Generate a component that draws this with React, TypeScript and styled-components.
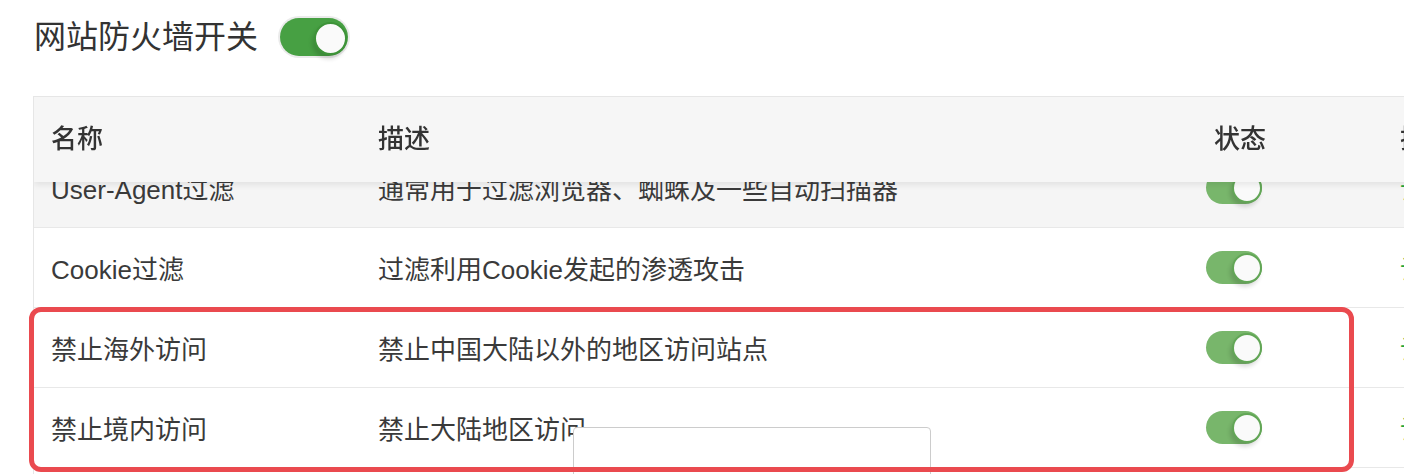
import React, { useLayoutEffect, useRef } from "react";
import styled, { createGlobalStyle } from "styled-components";

const GlobalStyle = createGlobalStyle`
  html, body {
    margin: 0;
    padding: 0;
    background: #ffffff;
    overflow: hidden;
  }
  body {
    font-family: "Liberation Sans", "Noto Sans CJK SC", sans-serif;
    color: #333333;
  }
  * { box-sizing: border-box; }
`;

const Page = styled.div`
  position: relative;
  width: 1404px;
  height: 474px;
  overflow: hidden;
  padding: 17px 0 0 33px;
`;

const TitleRow = styled.div`
  display: flex;
  align-items: center;
  gap: 22px;
  height: 40px;
`;

const Title = styled.h1`
  margin: 0;
  font-size: 32px;
  font-weight: 400;
  line-height: 40px;
  color: #333333;
  padding-left: 1px;
`;

const Track = styled.div<{ $size: "lg" | "sm" }>`
  display: flex;
  align-items: center;
  justify-content: flex-end;
  flex: none;
  width: ${(p) => (p.$size === "lg" ? "68px" : "56px")};
  height: ${(p) => (p.$size === "lg" ? "38px" : "33px")};
  border-radius: 20px;
  padding: ${(p) => (p.$size === "lg" ? "0 1px 0 0" : "0")};
  background: ${(p) => (p.$size === "lg" ? "#47a043" : "#78b66b")};
  box-shadow: ${(p) => (p.$size === "lg" ? "0 0 0 2px #ebebeb" : "none")};
`;

const Knob = styled.div<{ $size: "lg" | "sm" }>`
  width: ${(p) => (p.$size === "lg" ? "33px" : "30px")};
  height: ${(p) => (p.$size === "lg" ? "33px" : "30px")};
  margin-top: ${(p) => (p.$size === "lg" ? "2px" : "1px")};
  border-radius: 50%;
  background: #fafafa;
  border: 2px solid ${(p) => (p.$size === "lg" ? "#3e9339" : "#62a656")};
  box-shadow: -2px 4px 4px rgba(0, 0, 0, 0.14);
`;

const Switch: React.FC<{ size: "lg" | "sm" }> = ({ size }) => (
  <Track $size={size}>
    <Knob $size={size} />
  </Track>
);

const TableScroll = styled.div`
  margin-top: 39px;
  width: 1560px;
  height: 378px;
  overflow: hidden;
  border-top: 1px solid #e6e6e6;
  border-left: 1px solid #e6e6e6;
`;

const columns = "326px 828px 194px 212px";

const HeadRow = styled.div`
  position: sticky;
  top: 0;
  z-index: 2;
  display: grid;
  grid-template-columns: ${columns};
  height: 85px;
  padding-bottom: 6px;
  align-items: center;
  background: #f6f6f6;
  box-shadow: 0 3px 6px rgba(0, 0, 0, 0.08);
`;

const HeadCell = styled.div<{ $pad?: number }>`
  padding-left: ${(p) => p.$pad ?? 17}px;
  font-size: 26px;
  font-weight: 500;
  color: #333333;
  white-space: nowrap;
`;

const Row = styled.div<{ $hover?: boolean }>`
  display: grid;
  grid-template-columns: ${columns};
  height: 80px;
  align-items: center;
  border-bottom: 1px solid #e8e8e8;
  background: ${(p) => (p.$hover ? "#f5f5f5" : "#ffffff")};
`;

const Cell = styled.div<{ $pad?: number }>`
  padding-left: ${(p) => p.$pad ?? 17}px;
  font-size: 26px;
  color: #3a3a3a;
  white-space: nowrap;
  display: flex;
  align-items: center;
`;

const OpLink = styled.span`
  color: #20a53a;
  font-size: 26px;
`;

const Popup = styled.div`
  position: absolute;
  left: 573px;
  top: 427px;
  width: 358px;
  height: 80px;
  background: #ffffff;
  border: 1px solid #cccccc;
  border-radius: 4px;
  z-index: 5;
`;

const Highlight = styled.div`
  position: absolute;
  left: 29px;
  top: 307px;
  width: 1325px;
  height: 165px;
  border: 5px solid #ea4a4f;
  border-radius: 12px;
  z-index: 6;
  pointer-events: none;
`;

type Rule = { name: string; desc: string; hover?: boolean };

const rules: Rule[] = [
  { name: "User-Agent过滤", desc: "通常用于过滤浏览器、蜘蛛及一些自动扫描器", hover: true },
  { name: "Cookie过滤", desc: "过滤利用Cookie发起的渗透攻击" },
  { name: "禁止海外访问", desc: "禁止中国大陆以外的地区访问站点" },
  { name: "禁止境内访问", desc: "禁止大陆地区访问" },
  { name: "常见扫描器", desc: "过滤常见扫描测试工具的渗透测试" },
  { name: "使用CDN", desc: "该站点使用了CDN，启用后方可正确获取客户IP" },
];

export default function App() {
  const scrollRef = useRef<HTMLDivElement>(null);

  useLayoutEffect(() => {
    if (scrollRef.current) scrollRef.current.scrollTop = 34;
  }, []);

  return (
    <Page>
      <GlobalStyle />
      <TitleRow>
        <Title>网站防火墙开关</Title>
        <Switch size="lg" />
      </TitleRow>

      <TableScroll ref={scrollRef}>
        <HeadRow>
          <HeadCell>名称</HeadCell>
          <HeadCell $pad={18}>描述</HeadCell>
          <HeadCell $pad={26}>状态</HeadCell>
          <HeadCell $pad={18}>操作</HeadCell>
        </HeadRow>
        {rules.map((r) => (
          <Row key={r.name} $hover={r.hover}>
            <Cell>{r.name}</Cell>
            <Cell $pad={18}>{r.desc}</Cell>
            <Cell $pad={18}>
              <Switch size="sm" />
            </Cell>
            <Cell $pad={18}>
              <OpLink>设置</OpLink>
            </Cell>
          </Row>
        ))}
      </TableScroll>

      <Popup />
      <Highlight />
    </Page>
  );
}
